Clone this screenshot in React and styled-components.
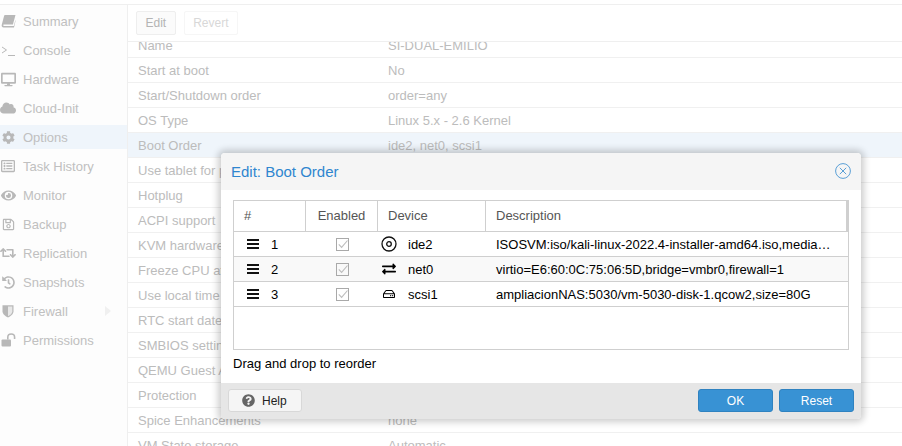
import React from "react";
import styled, { createGlobalStyle } from "styled-components";
import {
  FaDesktop,
  FaCloud,
  FaCog,
  FaRegListAlt,
  FaEye,
  FaRegSave,
  FaRetweet,
  FaHistory,
  FaExchangeAlt,
  FaRegHdd,
  FaQuestionCircle,
} from "react-icons/fa";

function ConsoleGlyph() {
  return (
    <svg width="15" height="14" viewBox="0 0 15 14" fill="none" stroke="currentColor" strokeWidth="1">
      <path d="M1 4l4.5 3L1 10" />
      <path d="M7 12.5h7" />
    </svg>
  );
}

function BookGlyph() {
  return (
    <svg width="15" height="14" viewBox="0 0 15 14" fill="currentColor">
      <path d="M4 1h10.5l-2.6 9.4H3.2c-.7 0-1 .4-1 .8s.4.8 1 .8h9.6l1.7-6.3v1.2L13 13.4H2.6C1.2 13.4.4 12.3.7 11L3 2.2C3.2 1.5 3.5 1 4 1z" />
    </svg>
  );
}

function ShieldGlyph() {
  return (
    <svg width="12" height="14" viewBox="0 0 12 14" fill="currentColor">
      <path d="M0.5 1.2h11v6c0 3-3 5.2-5.5 6.3C3.5 12.4.5 10.2.5 7.2z" />
      <path d="M6 2.4h4.3v4.8c0 2.2-2 3.9-4.3 5z" fill="#e8e8e8" />
    </svg>
  );
}

function UnlockGlyph() {
  return (
    <svg width="15" height="14" viewBox="0 0 15 14" fill="currentColor">
      <rect x="0.5" y="6.5" width="9.5" height="7" rx="1" />
      <path d="M6.8 6.5V4.2C6.8 2.3 8.3 1 10.2 1s3.4 1.300 3.4 3.200V6" fill="none" stroke="currentColor" strokeWidth="1.6" />
    </svg>
  );
}

function CdGlyph() {
  return (
    <svg width="16" height="16" viewBox="0 0 16 16" fill="none" stroke="#111" strokeWidth="1.3">
      <circle cx="8" cy="8" r="7" />
      <circle cx="8" cy="8" r="2.3" />
    </svg>
  );
}

function CheckedBox() {
  return (
    <svg width="13" height="13" viewBox="0 0 13 13" fill="none">
      <rect x="0.5" y="0.5" width="12" height="12" stroke="#a9a9a9" />
      <path d="M2.8 6.4l2.8 3L11.5 2.5" stroke="#bdbdbd" strokeWidth="1.1" />
    </svg>
  );
}

function Burger() {
  return (
    <svg width="12" height="10" viewBox="0 0 12 10" fill="#111">
      <rect x="0" y="0" width="12" height="2" />
      <rect x="0" y="4" width="12" height="2" />
      <rect x="0" y="8" width="12" height="2" />
    </svg>
  );
}

const navItems = [
  { label: "Summary", icon: <BookGlyph /> },
  { label: "Console", icon: <ConsoleGlyph /> },
  { label: "Hardware", icon: <FaDesktop size={15} /> },
  { label: "Cloud-Init", icon: <FaCloud size={16} /> },
  { label: "Options", icon: <FaCog size={13} />, active: true },
  { label: "Task History", icon: <FaRegListAlt size={14} /> },
  { label: "Monitor", icon: <FaEye size={15} /> },
  { label: "Backup", icon: <FaRegSave size={13} /> },
  { label: "Replication", icon: <FaRetweet size={16} /> },
  { label: "Snapshots", icon: <FaHistory size={13} /> },
  { label: "Firewall", icon: <ShieldGlyph />, arrow: true },
  { label: "Permissions", icon: <UnlockGlyph /> },
];

const optionRows = [
  ["Name", "SI-DUAL-EMILIO"],
  ["Start at boot", "No"],
  ["Start/Shutdown order", "order=any"],
  ["OS Type", "Linux 5.x - 2.6 Kernel"],
  ["Boot Order", "ide2, net0, scsi1", true],
  ["Use tablet for pointer", "Yes"],
  ["Hotplug", "Disk, Network, USB"],
  ["ACPI support", "Yes"],
  ["KVM hardware virtualization", "Yes"],
  ["Freeze CPU at startup", "No"],
  ["Use local time for RTC", "Default (Enabled for Windows)"],
  ["RTC start date", "now"],
  ["SMBIOS settings (type1)", "uuid=auto"],
  ["QEMU Guest Agent", "Default (Disabled)"],
  ["Protection", "No"],
  ["Spice Enhancements", "none"],
  ["VM State storage", "Automatic"],
];

const bootRows = [
  {
    order: 1,
    device: "ide2",
    icon: <CdGlyph />,
    description: "ISOSVM:iso/kali-linux-2022.4-installer-amd64.iso,media=cdrom,size=3.8G",
  },
  {
    order: 2,
    device: "net0",
    icon: <FaExchangeAlt size={14} />,
    description: "virtio=E6:60:0C:75:06:5D,bridge=vmbr0,firewall=1",
    striped: true,
  },
  {
    order: 3,
    device: "scsi1",
    icon: <FaRegHdd size={12} />,
    description: "ampliacionNAS:5030/vm-5030-disk-1.qcow2,size=80G",
  },
];

const App = () => {
  return (
    <Page>
      <GlobalStyle />
      <Sidebar>
        {navItems.map((item) => (
          <NavItem key={item.label} $active={item.active}>
            <NavIcon>{item.icon}</NavIcon>
            {item.label}
            {item.arrow && <NavArrow />}
          </NavItem>
        ))}
      </Sidebar>

      <Content>
        <Toolbar>
          <ToolButton>Edit</ToolButton>
          <ToolButton $disabled>Revert</ToolButton>
        </Toolbar>
        <OptionList>
          {optionRows.map(([name, value, selected]) => (
            <OptionRow key={name} $selected={selected}>
              <OptionName>{name}</OptionName>
              <span>{value}</span>
            </OptionRow>
          ))}
        </OptionList>
      </Content>

      <Dialog>
        <DialogHeader>
          <DialogTitle>Edit: Boot Order</DialogTitle>
          <svg width="16" height="16" viewBox="0 0 16 16" fill="none" stroke="#5a9fd6">
            <circle cx="8" cy="8" r="7.4" />
            <path d="M4.8 4.8l6.4 6.4M11.2 4.8l-6.4 6.4" />
          </svg>
        </DialogHeader>

        <DialogBody>
          <Grid>
            <GridHead>
              <HeadCell>#</HeadCell>
              <HeadCell $center>Enabled</HeadCell>
              <HeadCell>Device</HeadCell>
              <HeadCell>Description</HeadCell>
            </GridHead>
            {bootRows.map((row) => (
              <GridRow key={row.order} $striped={row.striped}>
                <OrderCell>
                  <Burger />
                  <span>{row.order}</span>
                </OrderCell>
                <CheckCell>
                  <CheckedBox />
                </CheckCell>
                <DeviceCell>
                  <DeviceIcon>{row.icon}</DeviceIcon>
                  {row.device}
                </DeviceCell>
                <DescriptionCell>{row.description}</DescriptionCell>
              </GridRow>
            ))}
          </Grid>
          <Hint>Drag and drop to reorder</Hint>
        </DialogBody>

        <DialogFooter>
          <HelpButton>
            <FaQuestionCircle size={13} color="#666" />
            Help
          </HelpButton>
          <FooterActions>
            <PrimaryButton>OK</PrimaryButton>
            <PrimaryButton>Reset</PrimaryButton>
          </FooterActions>
        </DialogFooter>
      </Dialog>
    </Page>
  );
};

const GlobalStyle = createGlobalStyle`
  html, body {
    margin: 0;
    padding: 0;
    background: #fff;
    overflow: hidden;
  }
  body {
    font-family: "Liberation Sans", Arial, sans-serif;
    font-size: 12px;
  }
`;

const Page = styled.div`
  position: relative;
  width: 902px;
  height: 446px;
  box-sizing: border-box;
  padding-top: 4px;
  display: flex;
  overflow: hidden;
  background: #fff;

  &::before {
    content: "";
    position: absolute;
    top: 4px;
    left: 0;
    right: 0;
    border-top: 1px solid #efefef;
  }
`;

const Sidebar = styled.nav`
  width: 127px;
  flex: none;
  padding-top: 5px;
  background: #fdfdfd;
  border-right: 1px solid #efefef;
`;

const NavItem = styled.div`
  position: relative;
  height: 24px;
  margin-bottom: 5px;
  display: flex;
  align-items: center;
  color: #c0c0c0;
  font-size: 13px;
  background: ${({ $active }) => ($active ? "#eff5fb" : "transparent")};
`;

const NavIcon = styled.span`
  width: 16px;
  margin: 0 7px 0 0;
  display: flex;
  justify-content: center;
  color: #b8b8b8;
`;

const NavArrow = styled.span`
  position: absolute;
  left: 105px;
  top: 7px;
  border-left: 6px solid #f0f0f0;
  border-top: 5px solid transparent;
  border-bottom: 5px solid transparent;
`;

const Content = styled.main`
  flex: 1;
  min-width: 0;
  overflow: hidden;
`;

const Toolbar = styled.div`
  height: 37px;
  box-sizing: border-box;
  margin-top: 1px;
  padding: 6px 8px 0;
  display: flex;
  gap: 8px;
  align-items: flex-start;
  background: #fff;
  border-bottom: 1px solid #efefef;
  position: relative;
  z-index: 1;
`;

const ToolButton = styled.div`
  height: 24px;
  box-sizing: border-box;
  padding: 0 8.5px;
  display: flex;
  align-items: center;
  border: 1px solid ${({ $disabled }) => ($disabled ? "#f6f6f6" : "#eeeeee")};
  border-radius: 2px;
  background: ${({ $disabled }) => ($disabled ? "#fff" : "#fbfbfb")};
  color: ${({ $disabled }) => ($disabled ? "#d8d8d8" : "#b4b4b4")};
`;

const OptionList = styled.div`
  margin-top: -9px;
`;

const OptionRow = styled.div`
  height: 24px;
  padding-left: 10px;
  display: flex;
  align-items: center;
  color: #bcbcbc;
  font-size: 13px;
  background: ${({ $selected }) => ($selected ? "#eff5fb" : "#fff")};
  border-bottom: 1px solid #f0f0f0;
`;

const OptionName = styled.span`
  width: 250px;
  white-space: nowrap;
`;

const Dialog = styled.section`
  position: absolute;
  left: 221px;
  top: 153px;
  width: 640px;
  height: 266px;
  display: flex;
  flex-direction: column;
  overflow: hidden;
  background: #fff;
  border-radius: 4px;
  box-shadow: 0 0 7px 3px rgba(0, 0, 0, 0.2);
`;

const DialogHeader = styled.header`
  height: 37px;
  box-sizing: border-box;
  flex: none;
  padding: 0 10px 1px;
  display: flex;
  align-items: center;
  justify-content: space-between;
  background: #f5f5f5;
`;

const DialogTitle = styled.h2`
  margin: 0;
  color: #2f86cf;
  font-size: 15px;
  font-weight: 400;
`;

const DialogBody = styled.div`
  flex: 1;
  padding: 10px 12px 0;
`;

const Grid = styled.div`
  height: 150px;
  box-sizing: border-box;
  border: 1px solid #cfcfcf;
`;

const gridColumns = "72px 72px 108px 1fr";

const GridHead = styled.div`
  height: 30px;
  display: grid;
  grid-template-columns: ${gridColumns};
  border-bottom: 1px solid #cfcfcf;
  border-right: 2px solid #cfcfcf;
`;

const HeadCell = styled.div`
  padding: 0 0 1px ${({ $center }) => ($center ? "0" : "10px")};
  display: flex;
  align-items: center;
  justify-content: ${({ $center }) => ($center ? "center" : "flex-start")};
  color: #555;
  font-size: 13px;
  border-right: 1px solid #cfcfcf;

  &:last-child {
    border-right: 0;
  }
`;

const GridRow = styled.div`
  height: 24px;
  display: grid;
  grid-template-columns: ${gridColumns};
  align-items: center;
  color: #000;
  font-size: 13px;
  background: ${({ $striped }) => ($striped ? "#f9f9f9" : "#fff")};
  border-bottom: 1px solid #cfcfcf;
`;

const OrderCell = styled.div`
  padding-left: 13px;
  display: flex;
  align-items: center;
  gap: 12px;
`;

const CheckCell = styled.div`
  display: flex;
  justify-content: center;
`;

const DeviceCell = styled.div`
  padding-left: 3px;
  display: flex;
  align-items: center;
`;

const DeviceIcon = styled.span`
  width: 16px;
  margin-right: 11px;
  display: flex;
  justify-content: center;
`;

const DescriptionCell = styled.div`
  padding: 0 16px 0 10px;
  white-space: nowrap;
  overflow: hidden;
  text-overflow: ellipsis;
`;

const Hint = styled.div`
  margin-top: 6px;
  color: #000;
  font-size: 13px;
`;

const DialogFooter = styled.footer`
  height: 36px;
  flex: none;
  box-sizing: border-box;
  padding: 6px 7px;
  display: flex;
  justify-content: space-between;
  background: #e6e6e6;
`;

const FooterActions = styled.div`
  display: flex;
  gap: 6px;
`;

const HelpButton = styled.div`
  width: 74px;
  height: 23px;
  box-sizing: border-box;
  padding-left: 13px;
  display: flex;
  align-items: center;
  gap: 7px;
  color: #222;
  background: #f5f5f5;
  border: 1px solid #d8d8d8;
  border-radius: 3px;
`;

const PrimaryButton = styled.div`
  width: 75px;
  height: 23px;
  box-sizing: border-box;
  display: flex;
  align-items: center;
  justify-content: center;
  color: #fff;
  background: #3892d4;
  border: 1px solid #2f82c0;
  border-radius: 3px;
`;

export default App;
